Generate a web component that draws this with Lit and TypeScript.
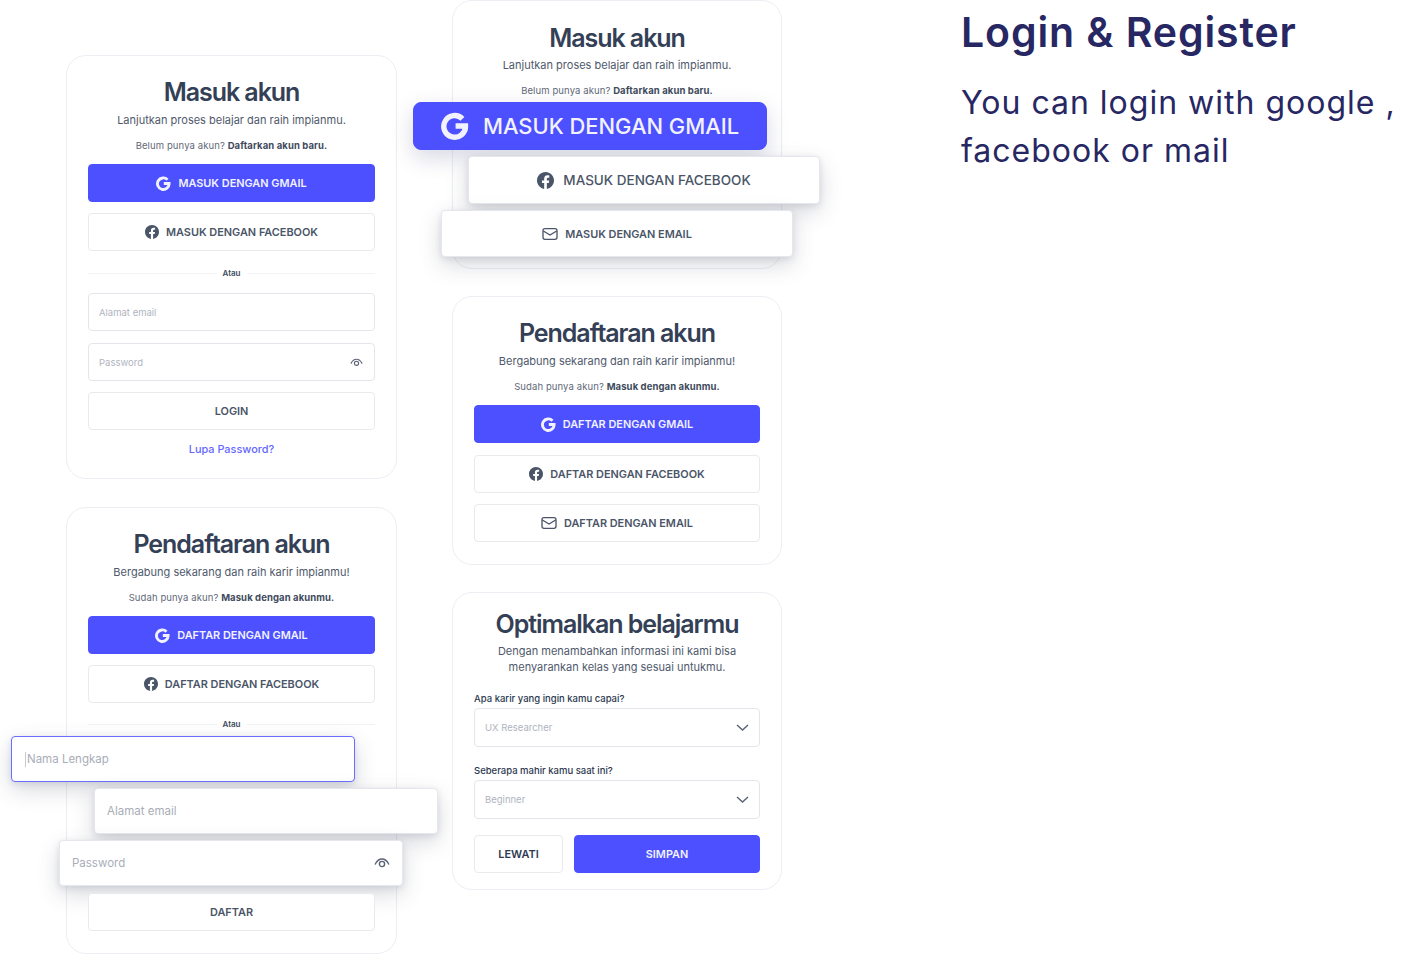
import { LitElement, html, css, svg } from "lit";
import { customElement } from "lit/decorators.js";

const gIcon = html`<svg class="ic g" viewBox="0 0 24 24" fill="none" stroke="currentColor" stroke-width="4.6"><path d="M18.4 5.9A9.3 9.3 0 1 0 21 12H12.5" stroke-linejoin="miter"/></svg>`;
const fbIcon = html`<svg class="ic" viewBox="0 0 24 24" fill="currentColor"><path d="M24 12.073c0-6.627-5.373-12-12-12s-12 5.373-12 12c0 5.99 4.388 10.954 10.125 11.854v-8.385H7.078v-3.47h3.047V9.43c0-3.007 1.792-4.669 4.533-4.669 1.312 0 2.686.235 2.686.235v2.953H15.83c-1.491 0-1.956.925-1.956 1.874v2.25h3.328l-.532 3.47h-2.796v8.385C19.612 23.027 24 18.062 24 12.073z"/></svg>`;
const mailIcon = html`<svg class="ic mail" viewBox="0 0 24 24" fill="none" stroke="currentColor" stroke-width="2"><rect x="1.5" y="4" width="21" height="16" rx="3"/><path d="M2 7.5l10 6 10-6"/></svg>`;
const eyeIcon = html`<svg class="eye" viewBox="0 0 24 24" fill="none" stroke="currentColor" stroke-width="2.1" stroke-linecap="round"><path d="M2 13.5C4.5 8.5 8 6 12 6s7.500 2.500 10 7.500"/><circle cx="12" cy="13.500" r="3.900"/></svg>`;
const chev = svg`<path d="M1 1l5.500 5L12 1"/>`;
const chevron = html`<svg class="chev" viewBox="0 0 13 8" fill="none" stroke="currentColor" stroke-width="1.400">${chev}</svg>`;

@customElement("app-root")
export class AppRoot extends LitElement {
  static styles = css`
    :host { display: block; height: 954px; overflow: hidden; background: #fff; font-family: Inter, "Liberation Sans", sans-serif; color: #4a5568; }
    * { box-sizing: border-box; }
    .page { display: flex; align-items: flex-start; padding-left: 66px; }
    .col { display: flex; flex-direction: column; flex: none; }
    .col1 { width: 331px; padding-top: 55px; gap: 28px; margin-right: 55px; }
    .col2 { width: 330px; gap: 27px; margin-right: 179px; }
    .card { border: 1px solid #eceef3; border-radius: 20px; padding: 21px 21px 22px; background: #fff; display: flex; flex-direction: column; align-items: stretch; }
    .reg { padding-bottom: 22px; }
    .top { height: 269px; padding-top: 22px; }
    .top .sub { margin-top: 4px; }
    .opt { padding: 16px 21px 16px; }
    h2 { margin: 0; font-size: 25px; line-height: 30px; font-weight: 600; letter-spacing: -1.05px; color: #344056; text-align: center; }
    .sub { margin: 5px 0 0; font-size: 11px; line-height: 16px; color: #4f596c; text-align: center; white-space: nowrap; }
    .alt { margin: 11px 0 0; font-size: 9.500px; line-height: 14px; color: #5f6879; text-align: center; white-space: nowrap; letter-spacing: .1px; }
    .alt b { font-weight: 700; color: #414b5d; }
    .btn { height: 38px; border: 1px solid #e8eaee; border-radius: 4px; display: flex; align-items: center; justify-content: center; gap: 7px; font-size: 10.900px; font-weight: 600; color: #4a5568; background: #fff; white-space: nowrap; }
    .btn.primary { background: #4c50ff; border-color: #4c50ff; color: #f2f2ff; }
    .first { margin-top: 11px; }
    .mt11 { margin-top: 11px; }
    .mt12 { margin-top: 12px; }
    .ic { width: 14px; height: 14px; flex: none; }
    .g { width: 15px; height: 15px; }
    .mail { width: 16px; height: 16px; }
    .atau { margin-top: 16px; height: 12px; display: flex; align-items: center; gap: 6px; font-size: 8px; font-weight: 600; color: #414b5d; }
    .atau.reg-atau { margin-top: 15px; }
    .atau::before, .atau::after { content: ""; flex: 1; height: 1px; background: #f2f3f6; }
    .field { height: 38px; border: 1px solid #e4e6eb; border-radius: 4px; display: flex; align-items: center; justify-content: space-between; padding: 0 11px 0 10px; font-size: 9.500px; color: #b0b4c0; background: #fff; }
    .eye { width: 13px; height: 13px; color: #5a6375; }
    .chev { width: 13px; height: 8px; color: #5a6375; }
    .sel { padding-right: 10px; }
    .after-atau { margin-top: 14px; }
    .lupa { margin: 12px 0 0; height: 14px; font-size: 10.900px; line-height: 15px; font-weight: 500; color: #6366ff; text-align: center; }
    .float-stack { display: flex; flex-direction: column; align-items: flex-start; gap: 6px; }
    .float { box-shadow: 0 8px 22px rgba(60, 66, 90, .2), 0 2px 6px rgba(60, 66, 90, .12); border-color: #e6e7ec; }
    .reg-stack { margin-top: 6px; }
    .log-stack { margin-top: 4px; }
    .bigfield { width: 344px; height: 46px; font-size: 11.500px; color: #a9adb9; padding: 0 12px 0 12px; }
    .nama { margin-left: -77px; border-color: #6a6dff; padding-left: 13px; }
    .nama span { border-left: 1px solid #c8cad2; padding-left: 1px; line-height: 15px; }
    .almt { margin-left: 6px; }
    .pwd { margin-left: -29px; }
    .bigfield .eye { width: 16px; height: 16px; }
    .daftar { margin-top: 7px; }
    .big-g { width: 354px; height: 48px; margin-left: -61px; font-size: 21.900px; font-weight: 500; gap: 14px; border-radius: 8px; box-shadow: 0 8px 22px rgba(60, 66, 120, .2); }
    .big-g .ic { width: 28px; height: 28px; }
    .big-f { width: 352px; height: 48px; margin-left: -6px; font-size: 13.500px; font-weight: 500; gap: 9px; }
    .big-f .ic { width: 17px; height: 17px; }
    .big-m { width: 352px; height: 47px; margin-left: -33px; }
    .two { margin: 4px 0 0; font-size: 11px; line-height: 16px; color: #4f596c; text-align: center; white-space: nowrap; }
    label { display: block; margin-top: 18px; font-size: 9.500px; line-height: 12px; font-weight: 500; color: #2d3950; white-space: nowrap; }
    .sel { margin-top: 3px; height: 39px; }
    .row { margin-top: 16px; display: flex; gap: 11px; }
    .lewati { width: 89px; color: #2d3950; }
    .simpan { flex: 1; }
    .head { padding-top: 6px; white-space: nowrap; color: #272763; }
    h1 { margin: 0; font-size: 41px; line-height: 52px; font-weight: 600; letter-spacing: .9px; }
    .lead { margin: 21px 0 0; font-size: 32px; line-height: 48px; font-weight: 400; letter-spacing: 1px; }
  `;

  render() {
    return html`<div class="page">
      <div class="col col1">
        <section class="card">
          <h2>Masuk akun</h2>
          <p class="sub">Lanjutkan proses belajar dan raih impianmu.</p>
          <p class="alt">Belum punya akun? <b>Daftarkan akun baru.</b></p>
          <div class="btn primary first">${gIcon}MASUK DENGAN GMAIL</div>
          <div class="btn mt11">${fbIcon}MASUK DENGAN FACEBOOK</div>
          <div class="atau">Atau</div>
          <div class="field after-atau">Alamat email</div>
          <div class="field mt12">Password${eyeIcon}</div>
          <div class="btn mt11">LOGIN</div>
          <div class="lupa">Lupa Password?</div>
        </section>
        <section class="card reg">
          <h2>Pendaftaran akun</h2>
          <p class="sub">Bergabung sekarang dan raih karir impianmu!</p>
          <p class="alt">Sudah punya akun? <b>Masuk dengan akunmu.</b></p>
          <div class="btn primary first">${gIcon}DAFTAR DENGAN GMAIL</div>
          <div class="btn mt11">${fbIcon}DAFTAR DENGAN FACEBOOK</div>
          <div class="atau reg-atau">Atau</div>
          <div class="float-stack reg-stack">
            <div class="field float bigfield nama"><span>Nama Lengkap</span></div>
            <div class="field float bigfield almt">Alamat email</div>
            <div class="field float bigfield pwd">Password${eyeIcon}</div>
          </div>
          <div class="btn daftar">DAFTAR</div>
        </section>
      </div>
      <div class="col col2">
        <section class="card top">
          <h2>Masuk akun</h2>
          <p class="sub">Lanjutkan proses belajar dan raih impianmu.</p>
          <p class="alt">Belum punya akun? <b>Daftarkan akun baru.</b></p>
          <div class="float-stack log-stack">
            <div class="btn primary big-g">${gIcon}MASUK DENGAN GMAIL</div>
            <div class="btn float big-f">${fbIcon}MASUK DENGAN FACEBOOK</div>
            <div class="btn float big-m">${mailIcon}MASUK DENGAN EMAIL</div>
          </div>
        </section>
        <section class="card">
          <h2>Pendaftaran akun</h2>
          <p class="sub">Bergabung sekarang dan raih karir impianmu!</p>
          <p class="alt">Sudah punya akun? <b>Masuk dengan akunmu.</b></p>
          <div class="btn primary first">${gIcon}DAFTAR DENGAN GMAIL</div>
          <div class="btn mt12">${fbIcon}DAFTAR DENGAN FACEBOOK</div>
          <div class="btn mt11">${mailIcon}DAFTAR DENGAN EMAIL</div>
        </section>
        <section class="card opt">
          <h2>Optimalkan belajarmu</h2>
          <p class="two">Dengan menambahkan informasi ini kami bisa<br />menyarankan kelas yang sesuai untukmu.</p>
          <label>Apa karir yang ingin kamu capai?</label>
          <div class="field sel">UX Researcher${chevron}</div>
          <label>Seberapa mahir kamu saat ini?</label>
          <div class="field sel">Beginner${chevron}</div>
          <div class="row">
            <div class="btn lewati">LEWATI</div>
            <div class="btn primary simpan">SIMPAN</div>
          </div>
        </section>
      </div>
      <div class="head">
        <h1>Login &amp; Register</h1>
        <p class="lead">You can login with google ,<br />facebook or mail</p>
      </div>
    </div>`;
  }
}
